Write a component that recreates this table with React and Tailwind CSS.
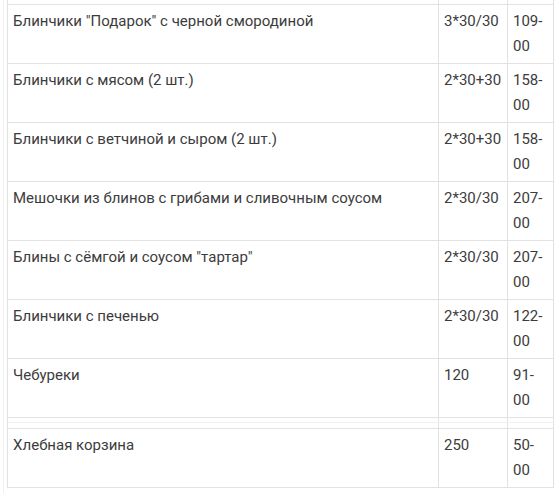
const rows = [
  ['Блинчики "Подарок" с черной смородиной', '3*30/30', '109-'],
  ['Блинчики с мясом (2 шт.)', '2*30+30', '158-'],
  ['Блинчики с ветчиной и сыром (2 шт.)', '2*30+30', '158-'],
  ['Мешочки из блинов с грибами и сливочным соусом', '2*30/30', '207-'],
  ['Блины с сёмгой и соусом "тартар"', '2*30/30', '207-'],
  ['Блинчики с печенью', '2*30/30', '122-'],
  ['Чебуреки', '120', '91-'],
]

function Row({ cells, h = 'h-[58px]', line = 'border-[#e2e2e2]' }) {
  return (
    <div className={`grid grid-cols-[431px_69px_46px] border-b ${line}`}>
      {[0, 1, 2].map((i) => (
        <div
          key={i}
          className={`${h} border-r border-[#e2e2e2] pl-[5px] pt-[4px] leading-[25px]`}
        >
          {cells && i < 2 && cells[i]}
          {cells && i === 2 && (
            <>
              {cells[2]}
              <br />
              00
            </>
          )}
        </div>
      ))}
    </div>
  )
}

export default function App() {
  return (
    <div
      className="w-[558px] h-[493px] overflow-hidden bg-white pl-[3px] text-[15px] text-[#3c3c3c]"
      style={{ fontFamily: 'Roboto, "Noto Sans", sans-serif' }}
    >
      <div className="h-full border-l border-[#f1f1f1] pl-[3px]">
        <div className="w-[547px] border-l border-[#e2e2e2]">
          <Row h="h-[3px]" />
          {rows.map((r, i) => (
            <Row key={i} cells={r} />
          ))}
          <Row h="h-[4px]" line="border-[#efefef]" />
          <Row h="h-[5px]" />
          <Row cells={['Хлебная корзина', '250', '50-']} />
        </div>
      </div>
    </div>
  )
}
